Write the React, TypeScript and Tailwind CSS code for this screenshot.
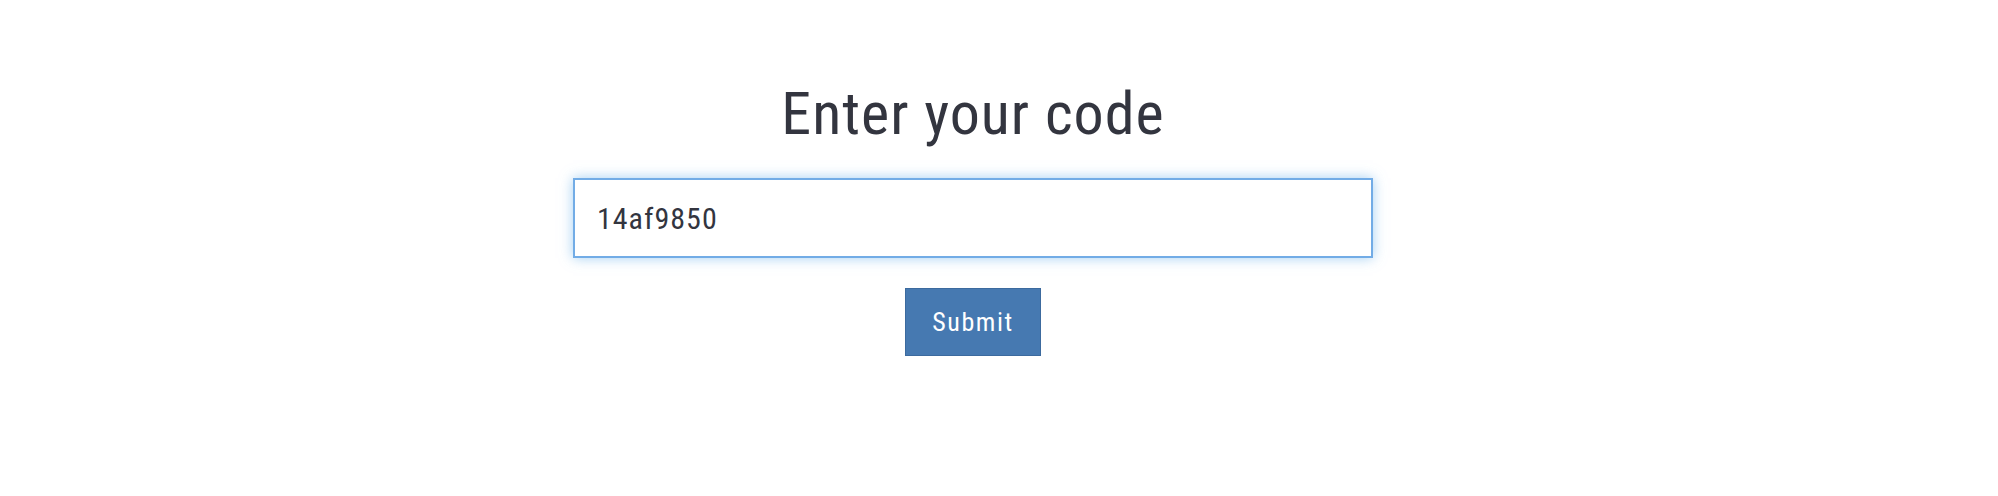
export default function App() {
  return (
    <div className="min-h-[496px] bg-white font-['Roboto_Condensed',Roboto,sans-serif] text-[#33353f]">
      <div className="flex justify-center pr-[52px] pt-[78px]">
        <form className="flex w-[800px] flex-col items-center">
          <h1 className="text-[60px] leading-[72px] tracking-[1px]">Enter your code</h1>

          <input
            type="text"
            defaultValue="14af9850"
            className="mt-[28px] h-[80px] w-full border-2 border-[#72ace6] bg-white px-[22px] text-[30px] tracking-[1px] text-[#33353f] shadow-[0_0_12px_rgba(102,175,233,0.6)] outline-none"
          />

          <button
            type="button"
            className="mt-[30px] h-[68px] w-[136px] border border-[#3c6a9e] bg-[#4679b1] text-[26px] tracking-[1.6px] text-white"
          >
            Submit
          </button>
        </form>
      </div>
    </div>
  );
}
